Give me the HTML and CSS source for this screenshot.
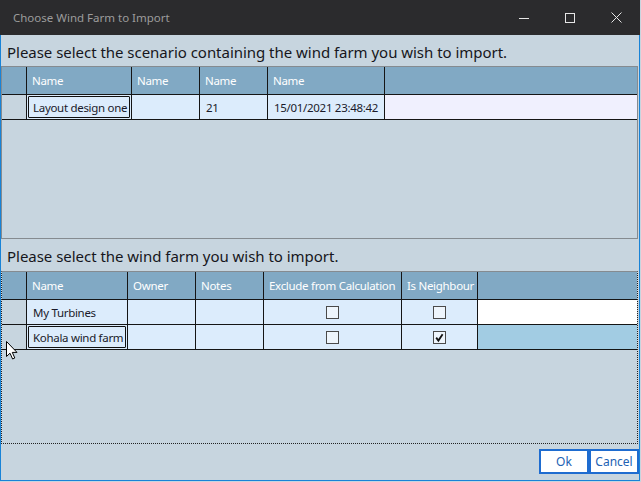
FILE: index.html
```html
<!DOCTYPE html>
<html>
<head>
<meta charset="utf-8">
<link rel="stylesheet" href="styles.css">
</head>
<body>
<div class="window">
  <div class="titlebar">
    <span class="title">Choose Wind Farm to Import</span>
    <div class="controls">
      <span class="ctl"><svg width="10" height="10" viewBox="0 0 10 10"><line x1="0" y1="5.5" x2="10" y2="5.5" stroke="#e6e6e6" stroke-width="1"/></svg></span>
      <span class="ctl"><svg width="10" height="10" viewBox="0 0 10 10"><rect x="0.5" y="0.5" width="9" height="9" fill="none" stroke="#e6e6e6" stroke-width="1"/></svg></span>
      <span class="ctl"><svg width="11" height="11" viewBox="0 0 11 11"><path d="M0.5 0.5 L10.5 10.5 M10.5 0.5 L0.5 10.5" stroke="#e6e6e6" stroke-width="1"/></svg></span>
    </div>
  </div>
  <div class="content">
    <div class="prompt p1">Please select the scenario containing the wind farm you wish to import.</div>
    <div class="box">
      <div class="grid g1">
        <div class="hd rh"></div>
        <div class="hd">Name</div>
        <div class="hd">Name</div>
        <div class="hd">Name</div>
        <div class="hd">Name</div>
        <div class="hd last"></div>

        <div class="cell rh"></div>
        <div class="cell"><span class="focus">Layout design one</span></div>
        <div class="cell"></div>
        <div class="cell">21</div>
        <div class="cell">15/01/2021 23:48:42</div>
        <div class="cell last fill-lav"></div>
      </div>
    </div>
    <div class="prompt p2">Please select the wind farm you wish to import.</div>
    <div class="box dotted">
      <div class="grid g2">
        <div class="hd rh"></div>
        <div class="hd">Name</div>
        <div class="hd">Owner</div>
        <div class="hd">Notes</div>
        <div class="hd">Exclude from Calculation</div>
        <div class="hd">Is Neighbour</div>
        <div class="hd last"></div>

        <div class="cell rh"></div>
        <div class="cell">My Turbines</div>
        <div class="cell"></div>
        <div class="cell"></div>
        <div class="cell center"><span class="cb"></span></div>
        <div class="cell center"><span class="cb"></span></div>
        <div class="cell last fill-white"></div>

        <div class="cell rh"></div>
        <div class="cell"><span class="focus">Kohala wind farm</span></div>
        <div class="cell"></div>
        <div class="cell"></div>
        <div class="cell center"><span class="cb"></span></div>
        <div class="cell center"><span class="cb"><svg width="11" height="11" viewBox="0 0 11 11"><path d="M2.2 5.6 L4.4 8.6 L8.6 2.2" fill="none" stroke="#111" stroke-width="1.8"/></svg></span></div>
        <div class="cell last fill-sel"></div>
      </div>
    </div>
    <div class="buttons">
      <button class="btn">Ok</button>
      <button class="btn">Cancel</button>
    </div>
  </div>
  <svg class="cursor" width="13" height="19" viewBox="0 0 13 19"><path d="M0.5 0.5 L0.5 15.5 L4 12.2 L6.6 18 L8.8 17 L6.3 11.4 L11 11.4 Z" fill="#fff" stroke="#000" stroke-width="1" stroke-linejoin="miter"/></svg>
</div>
</body>
</html>
```

FILE: styles.css
```css
* { box-sizing: border-box; }
html, body { margin: 0; padding: 0; background: #c7d5df; }
body { font-family: "Noto Sans", "Open Sans", sans-serif; }
.window {
  position: relative;
  width: 640px;
  height: 481px;
  display: flex;
  flex-direction: column;
}
.titlebar {
  height: 35px;
  background: #2b2b2d;
  display: flex;
  align-items: center;
  flex: none;
}
.title {
  padding-left: 13px;
  color: #9c9c9c;
  font-size: 11.5px;
  flex: 1;
}
.controls { display: flex; height: 35px; margin-right: 1px; }
.ctl {
  width: 46px;
  height: 35px;
  display: flex;
  align-items: center;
  justify-content: center;
}
.content {
  flex: 1;
  background: #c7d5df;
  border: 1px solid #1883d7;
  border-top: none;
  display: flex;
  flex-direction: column;
}
.prompt {
  color: #161620;
  font-size: 15px;
  letter-spacing: -0.03px;
  padding-left: 6px;
  display: flex;
  align-items: center;
  flex: none;
}
.p1 { height: 31px; padding-top: 2px; }
.p2 { height: 32px; padding-top: 1px; }
.box {
  height: 173px;
  width: 637px;
  border: 1px solid #858b90;
  flex: none;
}
.box.dotted {
  border: 1px dotted #222;
  border-top: 1px solid #858b90;
}
.grid {
  display: grid;
  grid-template-rows: 28px;
  grid-auto-rows: 25px;
}
.g1 { grid-template-columns: 25px 105px 68px 68px 117px 252px; }
.g2 { grid-template-columns: 25px 101px 68px 68px 138px 76px 159px; }
.hd, .cell {
  border-right: 1px solid #151515;
  border-bottom: 1px solid #151515;
  display: flex;
  align-items: center;
  padding-left: 6px;
  white-space: nowrap;
  overflow: hidden;
  font-size: 11.5px;
  letter-spacing: -0.3px;
}
.hd {
  background: #81a9c4;
  color: #ffffff;
  padding-bottom: 1px;
  padding-left: 5px;
}
.cell {
  background: #dcecfc;
  color: #1a1a2a;
}
.cell.rh { background: #c7d5df; }
.last { border-right: none; }
.fill-lav { background: #f0f0fe; }
.fill-white { background: #ffffff; }
.fill-sel { background: #a2cce3; }
.center { justify-content: center; padding-left: 0; }
.focus {
  display: flex;
  align-items: center;
  margin-left: -5px;
  padding-left: 4px;
  width: calc(100% + 4px);
  height: 22px;
  border: 1px solid #111;
  border-radius: 1px;
  overflow: hidden;
}
.cb {
  width: 13px;
  height: 13px;
  border: 1px solid #4a4a4a;
  background: #eef5fc;
  display: flex;
  align-items: center;
  justify-content: center;
}
.buttons {
  flex: 1;
  display: flex;
  justify-content: flex-end;
  align-items: flex-start;
  padding-top: 5px;
}
.btn {
  width: 50px;
  height: 25px;
  background: #ffffff;
  border: 2px solid #1e6cd0;
  color: #2262b4;
  font-family: "Noto Sans", "Open Sans", sans-serif;
  font-size: 12px;
  padding: 0;
  margin: 0;
}
.cursor {
  position: absolute;
  left: 6px;
  top: 341px;
}
```
